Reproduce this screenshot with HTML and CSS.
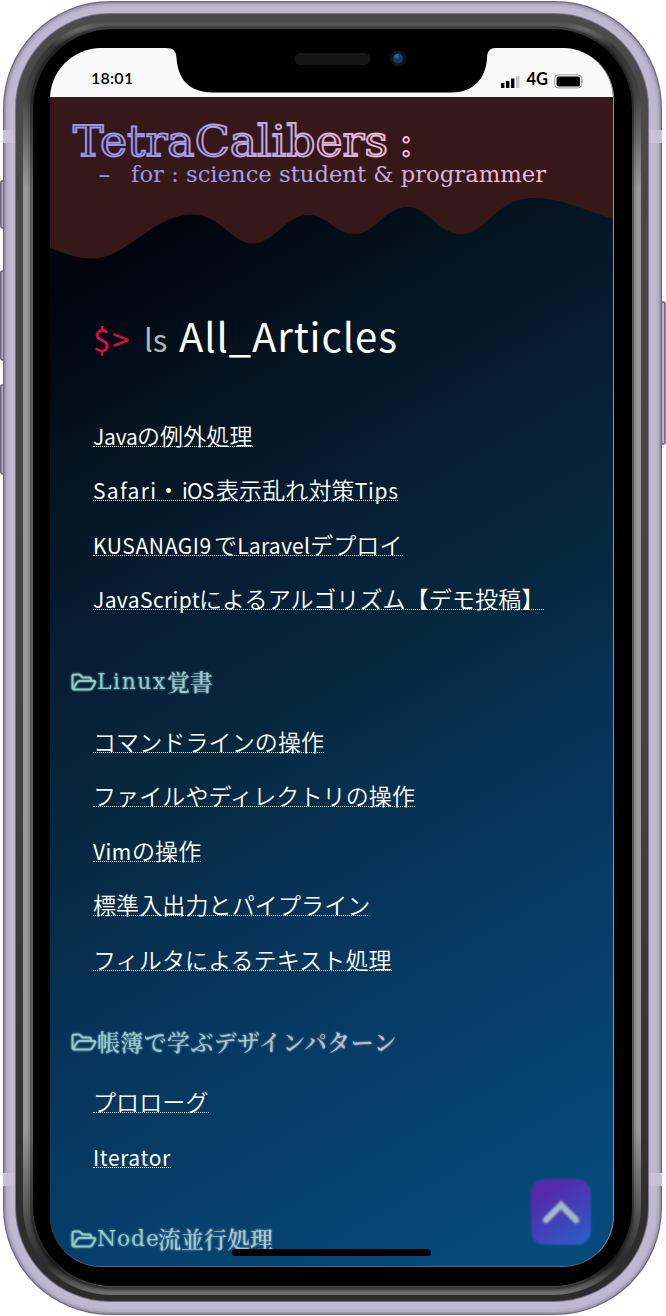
FILE: index.html
```html
<!DOCTYPE html>
<html lang="ja">
<head>
<meta charset="utf-8">
<title>TetraCalibers</title>
<link rel="stylesheet" href="styles.css">
</head>
<body>
<div class="phone">
  <svg class="chassis" viewBox="0 0 666 1316" aria-hidden="true">
    <defs>
      <linearGradient id="ring" x1="0" y1="0" x2="0" y2="1">
        <stop offset="0" stop-color="#4c4c4c"/><stop offset=".0065" stop-color="#686868"/>
        <stop offset=".02" stop-color="#343434"/><stop offset=".06" stop-color="#444"/><stop offset=".13" stop-color="#999"/>
        <stop offset=".87" stop-color="#999"/><stop offset=".94" stop-color="#505050"/><stop offset=".975" stop-color="#2b2b2b"/>
        <stop offset="1" stop-color="#707070"/>
      </linearGradient>
      <linearGradient id="band" x1="0" y1="0" x2="0" y2="1">
        <stop offset="0" stop-color="#4b4b4b"/><stop offset=".6" stop-color="#424242"/><stop offset="1" stop-color="#2b2b2b"/>
      </linearGradient>
    </defs>
    <g fill="#b8b0cc" stroke="#5f5872" stroke-width="1.4">
      <rect x=".8" y="181" width="8" height="47" rx="2"/>
      <rect x=".8" y="271" width="8" height="89" rx="2"/>
      <rect x=".8" y="385" width="8" height="89" rx="2"/>
      <rect x="658" y="302" width="7" height="142" rx="2"/>
    </g>
    <rect x="3" y="1" width="659" height="1314" rx="107" fill="#6f6884"/>
    <rect x="4.2" y="2.2" width="656.6" height="1311.6" rx="106" fill="#9e97b0"/>
    <rect x="6" y="4" width="653" height="1308" rx="104" fill="#b5aec8"/>
    <rect x="8.5" y="6.5" width="648" height="1303" rx="101.5" fill="#beb8d0"/>
    <g fill="#c8c0d8">
      <path d="M3 130h14v13H3zM648 130h14v13h-14zM3 1173h14v13H3zM648 1173h14v13h-14z"/>
    </g>
    <rect x="15" y="13" width="634" height="1289" rx="95" fill="#77718a"/>
    <rect x="16" y="14" width="632" height="1287" rx="94" fill="url(#band)"/>
    <rect x="23" y="21" width="618" height="1274" rx="88" fill="url(#ring)"/>
    <g fill="none" stroke="#000">
      <rect x="29" y="26" width="606" height="1264" rx="82" stroke-opacity=".12" stroke-width="2"/>
      <rect x="31.500" y="28" width="601" height="1260" rx="80" stroke-opacity=".4" stroke-width="3"/>
    </g>
    <rect x="33" y="29" width="599" height="1257" rx="79" fill="#000"/>
  </svg>

  <main class="screen">
    <div class="status">
      <span class="clock">18:01</span>
      <div class="signal">
        <svg width="20" height="13" viewBox="0 0 20 13"><path d="M1 8h3.400v5H1zM6 6h3.400v7H6zM11 3.500h3.400V13H11z"/><path d="M16 1h3.400v12H16z" fill="#c5c5c5"/></svg>
        <span class="network">4G</span>
        <svg width="30" height="15" viewBox="0 0 30 15"><rect x=".7" y=".9" width="27" height="13" rx="3.500" fill="#fff" stroke="#999"/><rect x="2.600" y="2.600" width="23.500" height="9.800" rx="2"/><path d="M28.500 5q1.500 2.500 0 5z" fill="#999"/></svg>
      </div>
      <svg class="notch" width="331" height="45" viewBox="165 48 331 45">
        <path d="M165 47V48C174 48 176 51 176.500 58C178 80 190 92.400 212 92.400H452C474 92.400 486 78 487 58C487 51 490 48 496 48V47Z"/>
        <rect x="294.500" y="53" width="76" height="12" rx="6" fill="#151515"/>
        <circle cx="398" cy="58.500" r="8" fill="#111319"/><circle cx="398" cy="58.500" r="5" fill="#173b67"/><path d="M394 57a4 4 0 0 1 5-3l-1 5z" fill="#2d68a2"/>
      </svg>
    </div>

    <header class="masthead">
      <svg class="wave" width="563" height="162" viewBox="50 97 563 162">
        <path fill="#371818" d="M50 97H613V219C585 210 561 198 534 198C494 198 488 234 461 234C438 234 428 207 408 207C384 207 376 234 355 234C334 234 328 215 308 215C286 215 274 243.500 253 243.500C231 243.500 221 214.500 192 214.500C153 214.500 127 258.500 92 258.500C75 258.500 64 253 50 248Z"/>
      </svg>
      <svg class="logo" width="500" height="80" viewBox="65 115 500 80">
        <defs>
          <linearGradient id="t1" gradientUnits="userSpaceOnUse" x1="73" x2="412"><stop offset=".2" stop-color="#9694f2"/><stop offset="1" stop-color="#f5bfd2"/></linearGradient>
          <linearGradient id="t2" gradientUnits="userSpaceOnUse" x1="99" x2="546"><stop offset=".2" stop-color="#9694f2"/><stop offset="1" stop-color="#f5bfd2"/></linearGradient>
        </defs>
        <text class="name" x="73" y="156" textLength="315" lengthAdjust="spacingAndGlyphs" stroke="url(#t1)">TetraCalibers</text>
        <text class="name" x="399" y="156" stroke="url(#t1)">:</text>
        <text class="tagline" x="98" y="182" textLength="13" lengthAdjust="spacingAndGlyphs" fill="url(#t2)">-</text>
        <text class="tagline" x="131" y="182" textLength="415" lengthAdjust="spacingAndGlyphs" fill="url(#t2)">for : science student &amp; programmer</text>
      </svg>
    </header>

    <h1 class="prompt"><span class="dollar">$&gt;</span><span class="command">ls</span><span class="target">All_Articles</span></h1>

    <ul class="articles">
      <li><a><span class="latin w44">Java</span>の例外処理</a></li>
      <li><a><span class="latin w67">Safari</span><span class="dot">・</span><span class="latin w34">iOS</span>表示乱れ対策<span class="latin w43">Tips</span></a></li>
      <li><a><span class="latin w121">KUSANAGI9</span>で<span class="latin w73">Laravel</span>デプロイ</a></li>
      <li><a><span class="latin w106">JavaScript</span>によるアルゴリズム【デモ投稿】</a></li>
    </ul>
    <h2 class="folder"><svg width="27" height="20"><use href="#folder"/></svg><span class="roman linux">Linux</span>覚書</h2>
    <ul class="articles">
      <li><a>コマンドラインの操作</a></li>
      <li><a>ファイルやディレクトリの操作</a></li>
      <li><a><span class="latin w39">Vim</span>の操作</a></li>
      <li><a>標準入出力とパイプライン</a></li>
      <li><a>フィルタによるテキスト処理</a></li>
    </ul>
    <h2 class="folder wide"><svg width="27" height="20"><use href="#folder"/></svg>帳簿で学ぶデザインパターン</h2>
    <ul class="articles">
      <li><a>プロローグ</a></li>
      <li><a><span class="latin w78">Iterator</span></a></li>
    </ul>
    <h2 class="folder"><svg width="27" height="20"><use href="#folder"/></svg><span class="roman node">Node</span>流並行処理</h2>

    <div class="to-top"><svg width="42" height="30" viewBox="0 0 42 30"><path d="M6 23L21 8L36 23" fill="none" stroke="#a4bac8" stroke-width="6.500" stroke-linecap="round"/></svg></div>
    <div class="home-bar"></div>
  </main>
  <svg class="symbols" width="0" height="0"><symbol id="folder" viewBox="0 0 27 20"><path d="M2.500 16V4.500Q2.500 2.500 4.500 2.500H9.500L12.500 5.500H19Q21 5.500 21 7.500V9M3 17L7 10.500Q8 9 9.500 9H24Q26 9 25 11L22.500 15.500Q21.500 17.500 19.500 17.500H4.500Q2.500 17.500 2.500 15.500" fill="none" stroke="#8fcac8" stroke-width="2" stroke-linejoin="round"/></symbol></svg>
</div>
</body>
</html>
```
FILE: styles.css
```css
* { box-sizing: border-box; }
body { margin: 0; background: #fff; }
.phone { position: relative; width: 666px; height: 1316px; padding: 48px 52px 0 50px; overflow: hidden; }
.chassis { position: absolute; inset: 0; width: 666px; height: 1316px; }
.symbols { position: absolute; }
.screen {
  position: relative; width: 564px; height: 1219px; overflow: hidden;
  border-radius: 51px; border-right: 1px solid #8b949c; border-bottom: 1px solid #56636f;
  background: linear-gradient(150deg, #00040c 16%, #04131e 27%, #061d33 40%, #06283f 52%, #07345a 66%, #064a7b 94%);
  color: #fff; font-family: "Noto Sans CJK JP", sans-serif;
}
.status {
  position: relative; display: flex; justify-content: space-between; height: 49px;
  padding: 19px 29px 0 41px; background: #f9f9f9; color: #000;
}
.clock { font: 600 16px/22px Lato, sans-serif; letter-spacing: .25px; }
.signal { display: flex; align-items: center; height: 24px; gap: 6px; }
.signal svg { position: relative; top: 2px; }
.network { font: 700 16.5px/22px Lato, sans-serif; }
.notch { position: absolute; left: 115px; top: 0; }
.masthead { position: relative; height: 162px; padding: 18px 0 0 15px; }
.wave { position: absolute; left: 0; top: 0; }
.logo { position: relative; display: block; }
.name { font: 400 42px "DejaVu Serif", serif; fill: #371818; stroke-width: 1.8px; }
.tagline { font: 21.5px "DejaVu Serif", serif; }
.prompt {
  display: flex; align-items: baseline; height: 60px; margin: 46px 0 57px; padding-left: 43px;
  font-family: "Noto Sans CJK JP", sans-serif; font-weight: 400; line-height: 60px;
}
.dollar { width: 51px; color: #e0084c; font-size: 31px; letter-spacing: 2px; }
.command { width: 35px; color: #aeb4b9; font-size: 31px; }
.target { font-size: 40px; letter-spacing: .9px; }
.articles { margin: 0; padding: 0 0 0 43px; list-style: none; }
.articles li { height: 54.4px; }
.articles a {
  display: flex; width: fit-content; height: 25px; border-bottom: 1px dotted #e4edf2;
  font-size: 23px; font-weight: 350; line-height: 27px; letter-spacing: .12px; white-space: nowrap;
}
.latin { font-size: 21px; font-weight: 400; line-height: 29px; }
.w34 { width: 34px; letter-spacing: -.8px; } .w39 { width: 39px; letter-spacing: .4px; }
.w43 { width: 43px; letter-spacing: .7px; } .w44 { width: 44px; letter-spacing: -.2px; }
.w67 { width: 67px; letter-spacing: 1.3px; } .w73 { width: 73px; letter-spacing: .3px; }
.w78 { width: 78px; letter-spacing: .6px; } .w106 { width: 106px; letter-spacing: .4px; }
.w121 { width: 121px; letter-spacing: .6px; }
.dot { width: 22px; text-indent: -3px; }
.folder {
  display: flex; align-items: center; height: 30px; width: 350px; margin: 27.4px 0 31px; padding-left: 20px;
  font: 600 23px/30px "Noto Serif CJK JP", "Noto Sans CJK JP", serif; white-space: nowrap;
  color: transparent; background: linear-gradient(90deg, #8dcbc8 15%, #a9c3cb 60%, #d0b4d4 100%); background-clip: text; -webkit-background-clip: text;
  filter: drop-shadow(0 0 1px #83aabd);
}
.wide { letter-spacing: .35px; }
.folder svg { flex: none; }
.roman { font-family: "DejaVu Serif", serif; font-weight: 400; font-size: 22px; }
.linux { width: 70px; letter-spacing: 1.5px; }
.node { width: 61px; letter-spacing: .8px; }
.to-top {
  position: absolute; left: 481px; top: 1131px; display: flex; align-items: center; justify-content: center;
  width: 60px; height: 66px; border-radius: 14px; filter: blur(.8px);
  background: linear-gradient(145deg, #542bab 25%, #2862cc);
}
.home-bar { position: absolute; left: 182px; top: 1201px; width: 199px; height: 7px; border-radius: 4px; background: #000; }
```
